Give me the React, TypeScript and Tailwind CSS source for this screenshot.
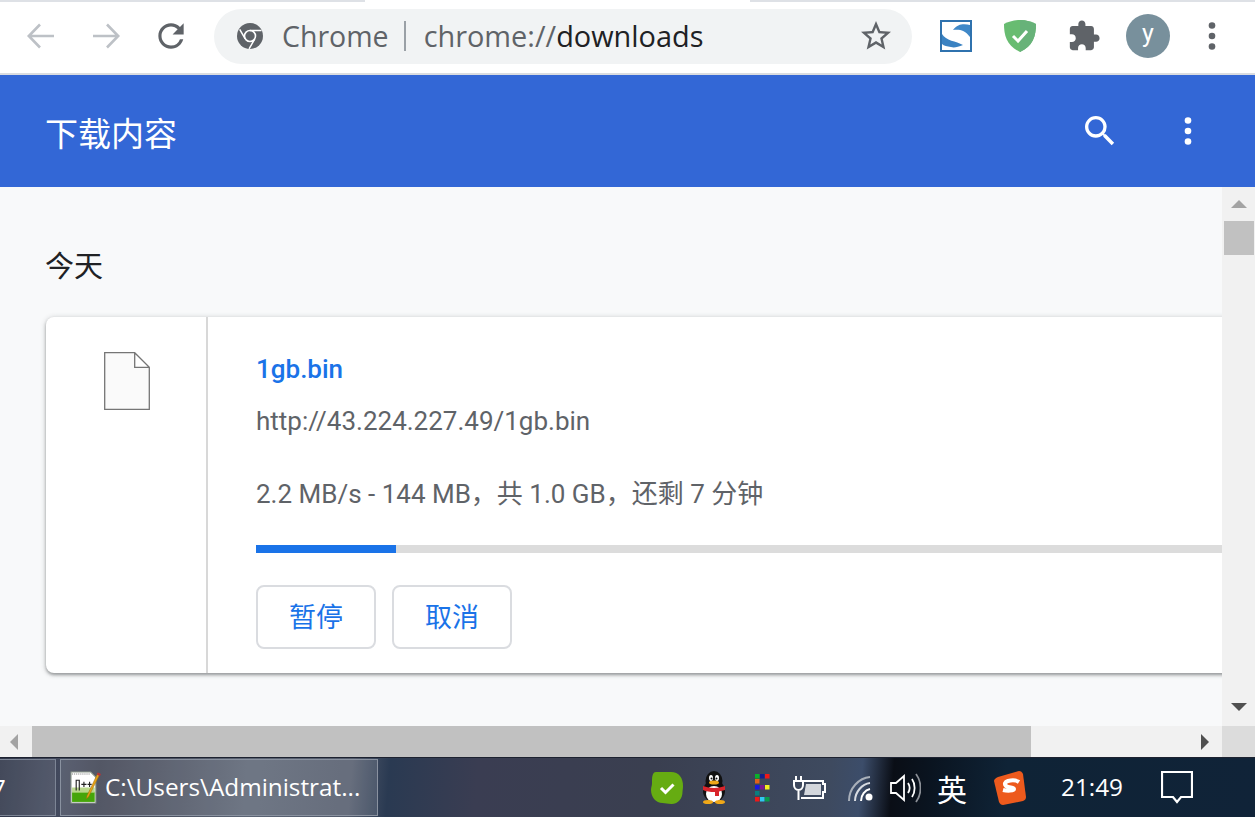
import React from "react";

const cjk = "font-['Roboto','Noto_Sans_CJK_SC',sans-serif]";

function Dots({ color, size = 36 }: { color: string; size?: number }) {
  return (
    <svg width={size} height={size} viewBox="0 0 24 24" fill={color}>
      <circle cx="12" cy="5" r="2.2" />
      <circle cx="12" cy="12" r="2.2" />
      <circle cx="12" cy="19" r="2.2" />
    </svg>
  );
}

function Arrow({ flip }: { flip?: boolean }) {
  return (
    <svg width="30" height="30" viewBox="0 0 30 30" fill="none" stroke="#bdc1c6" strokeWidth="2.6" style={flip ? { transform: "scaleX(-1)" } : undefined}>
      <path d="M28 15H3M14 3.500 2.800 15 14 26.500" />
    </svg>
  );
}

function ToolbarIcons() {
  return (
    <>
      <svg width="32" height="32" viewBox="0 0 32 32" className="ml-[28px]">
        <rect x="0" y="0" width="32" height="32" fill="#2f72ae" />
        <rect x="2" y="2" width="28" height="28" fill="#fff" />
        <path d="M13 10C18 3 25 4 30 5v12C25 10 19 9 13 10z" fill="#3f88c8" />
        <path d="M2 14c4 7 14 7 21 11-5 2-9 3-12 2-4-1-7-1-9-3z" fill="#3a82c2" />
      </svg>
      <svg width="32" height="32" viewBox="0 0 32 32" className="ml-[32px]">
        <path d="M16 0C10 0 4 2 0 4c0 12 3 22 16 28 13-6 16-16 16-28-4-2-10-4-16-4z" fill="#68bc71" />
        <path d="M16 0c6 0 12 2 16 4 0 12-3 22-16 28z" fill="#67b279" />
        <path d="M9 16l5 5 9-10" fill="none" stroke="#fff" strokeWidth="3" />
      </svg>
      <svg width="34" height="34" viewBox="0 0 24 24" fill="#5f6368" className="ml-[31px]">
        <path d="M20.500 11H19V7c0-1.100-.9-2-2-2h-4V3.500C13 2.120 11.880 1 10.500 1S8 2.120 8 3.500V5H4c-1.100 0-1.990.9-1.990 2v3.800H3.500c1.490 0 2.700 1.210 2.700 2.700s-1.210 2.700-2.700 2.700H2V20c0 1.100.9 2 2 2h3.800v-1.500c0-1.490 1.210-2.700 2.700-2.700 1.490 0 2.700 1.210 2.700 2.700V22H17c1.100 0 2-.9 2-2v-4h1.500c1.380 0 2.500-1.120 2.500-2.500S21.880 11 20.500 11z" />
      </svg>
      <div className="ml-[25px] flex h-[44px] w-[44px] items-center justify-center rounded-full bg-[#78909c] pb-[5px] font-['Roboto',sans-serif] text-[25px] text-white">
        y
      </div>
      <div className="ml-[24px]">
        <Dots color="#5f6368" />
      </div>
    </>
  );
}

function Toolbar() {
  return (
    <div className="relative flex h-[75px] shrink-0 items-center border-b-2 border-[#dadce0] bg-white pl-[26px] pb-[1px]">
      <div className="absolute left-0 top-0 h-[2px] w-[365px] bg-[#dee1e6]" />
      <div className="absolute left-[750px] right-0 top-0 h-[2px] bg-[#dee1e6]" />
      <Arrow />
      <div className="ml-[35px]">
        <Arrow flip />
      </div>
      <svg width="38" height="38" viewBox="0 0 24 24" fill="#5f6368" className="ml-[31px]">
        <path d="M17.650 6.350A7.958 7.958 0 0 0 12 4c-4.420 0-7.990 3.580-7.990 8s3.570 8 7.990 8c3.730 0 6.840-2.550 7.730-6h-2.080A5.990 5.990 0 0 1 12 18c-3.310 0-6-2.690-6-6s2.690-6 6-6c1.660 0 3.140.69 4.220 1.780L13 11h7V4l-2.350 2.350z" />
      </svg>
      <div className="ml-[24px] flex h-[55px] w-[698px] items-center rounded-full bg-[#f1f3f4] pl-[23px] font-['Open_Sans',sans-serif] text-[#5f6368]">
        <svg width="26" height="26" viewBox="0 0 26 26" className="shrink-0">
          <circle cx="13" cy="13" r="13" fill="#5f6368" />
          <circle cx="13" cy="13" r="5.500" fill="#5f6368" stroke="#fff" strokeWidth="1.600" />
          <path d="M13 7.500h11.500M8.200 15.800 2.700 6.300M17.800 15.800l-5.700 10" stroke="#fff" strokeWidth="1.500" fill="none" />
        </svg>
        <span className="ml-[19px] text-[28.500px] leading-none">Chrome</span>
        <div className="ml-[15px] h-[30px] w-[2px] bg-[#9aa0a6]" />
        <span className="ml-[18px] text-[28.900px] leading-none">
          chrome://<span className="text-[#202124]">downloads</span>
        </span>
        <svg width="36" height="36" viewBox="0 0 24 24" fill="#5f6368" className="ml-auto mr-[18px]">
          <path d="M22 9.240l-7.190-.62L12 2 9.190 8.630 2 9.240l5.460 4.730L5.820 21 12 17.270 18.180 21l-1.630-7.030L22 9.240zM12 15.400l-3.760 2.270 1-4.280-3.320-2.880 4.380-.38L12 6.100l1.710 4.040 4.380.38-3.320 2.880 1 4.280L12 15.400z" />
        </svg>
      </div>
      <ToolbarIcons />
    </div>
  );
}

function Header() {
  return (
    <div className={`flex h-[112px] shrink-0 items-center bg-[#3367d6] pl-[45px] pr-[49px] text-white ${cjk}`}>
      <h1 className="mt-[6px] text-[33px] font-normal leading-none">下载内容</h1>
      <svg width="40" height="40" viewBox="0 0 24 24" fill="#fff" className="ml-auto">
        <path d="M15.500 14h-.79l-.28-.27A6.471 6.471 0 0 0 16 9.500 6.500 6.500 0 1 0 9.500 16c1.610 0 3.090-.59 4.230-1.570l.27.28v.79l5 4.990L20.490 19l-4.990-5zm-6 0C7.010 14 5 11.990 5 9.500S7.010 5 9.500 5 14 7.010 14 9.500 11.990 14 9.500 14z" />
      </svg>
      <div className="ml-[50px]">
        <Dots color="#fff" />
      </div>
    </div>
  );
}

function DownloadCard() {
  return (
    <div className="flex h-[356px] w-[1300px] shrink-0 rounded-[8px] bg-white shadow-[0_2px_3px_0_rgba(60,64,67,0.4),0_1px_5px_1px_rgba(60,64,67,0.2)]">
      <div className="flex w-[162px] shrink-0 justify-center border-r-2 border-[#d8d8d8] pl-[1px] pt-[35px]">
        <svg width="46" height="58" viewBox="0 0 46 58" fill="#fafafa" stroke="#757575" strokeWidth="1.300">
          <path d="M.7.700h30l14.600 14.600v42H.7zM30.700.700v14.600h14.600" />
        </svg>
      </div>
      <div className={`w-[1000px] flex-1 pl-[48px] ${cjk}`}>
        <div className="mt-[37px] text-[26px] font-medium leading-[30px] text-[#1a73e8]">1gb.bin</div>
        <div className="mt-[22px] text-[26px] leading-[30px] text-[#5f6368]">http://43.224.227.49/1gb.bin</div>
        <div className="mt-[42px] text-[26px] leading-[32px] text-[#5f6368]">2.2 MB/s - 144 MB，共 1.0 GB，还剩 7 分钟</div>
        <div className="mt-[35px] h-[8px] bg-[#dcdcdc]">
          <div className="h-full w-[140px] bg-[#1a73e8]" />
        </div>
        <div className="mt-[32px] flex gap-[16px]">
          <button className="flex h-[64px] w-[120px] items-center justify-center rounded-[8px] border-2 border-[#dadce0] bg-white pt-[2px] text-[27px] text-[#1a73e8]">暂停</button>
          <button className="flex h-[64px] w-[120px] items-center justify-center rounded-[8px] border-2 border-[#dadce0] bg-white pt-[2px] text-[27px] text-[#1a73e8]">取消</button>
        </div>
      </div>
    </div>
  );
}

function VScroll() {
  return (
    <div className="flex w-[33px] shrink-0 flex-col items-center bg-[#f1f1f1]">
      <svg width="16" height="8" viewBox="0 0 16 8" fill="#a3a3a3" className="mt-[13px]">
        <path d="M8 0l8 8H0z" />
      </svg>
      <div className="ml-[1px] mt-[13px] h-[34px] w-[30px] bg-[#c1c1c1]" />
      <svg width="16" height="8" viewBox="0 0 16 8" fill="#505050" className="mb-[15px] mt-auto">
        <path d="M0 0h16L8 8z" />
      </svg>
    </div>
  );
}

function HScroll() {
  return (
    <div className="flex h-[31px] shrink-0 items-center bg-[#f1f1f1]">
      <div className="flex w-[32px] shrink-0 justify-center">
        <svg width="8" height="16" viewBox="0 0 8 16" fill="#a3a3a3" className="mr-[5px]">
          <path d="M8 0v16L0 8z" />
        </svg>
      </div>
      <div className="h-full w-[999px] bg-[#c1c1c1]" />
      <div className="flex-1" />
      <svg width="8" height="16" viewBox="0 0 8 16" fill="#505050" className="mr-[13px]">
        <path d="M0 0l8 8-8 8z" />
      </svg>
      <div className="h-full w-[33px] bg-[#dcdcdc]" />
    </div>
  );
}

function NotepadIcon() {
  return (
    <svg width="33" height="33" viewBox="0 0 32 32" className="shrink-0">
      <path d="M1 1h19l5 5v25H1z" fill="#fff" stroke="#8d9a8c" />
      <path d="M2 20h22v10H2z" fill="#46a50a" />
      <path d="M2 16h22v5H2z" fill="#b9d88a" />
      <path d="M2 3h17" stroke="#777" strokeDasharray="1 1" />
      <path d="M6 19V9h3v10M11 13h5M13.500 10.500v5M17 13h4M19 10.500v5" fill="none" stroke="#222" strokeWidth="1.100" />
      <path d="M29 3 18 25l-2 2 .5-3L27 2z" fill="#e8a317" stroke="#9c6b0e" strokeWidth=".5" />
      <path d="M27 1.500 30 3l-1 2-3-1.500z" fill="#b3333a" />
    </svg>
  );
}

function Tray() {
  return (
    <div className="flex items-center">
      <svg width="32" height="32" viewBox="0 0 32 32" className="ml-[7px]">
        <path d="M5 0h15c8 0 12 6 12 14 0 3-.5 4-.5 6 0 6-4 12-11 12-4 0-6-1-9-1C5 31 0 25 0 18c0-3 1-4 1-7C1 6 1 0 5 0z" fill="#66ac12" />
        <path d="M10 16l4.500 4.500 8-8" fill="none" stroke="#fff" strokeWidth="3" />
      </svg>
      <svg width="28" height="33" viewBox="0 0 28 33" className="ml-[17px]">
        <ellipse cx="14" cy="20" rx="11" ry="11" fill="#111" />
        <ellipse cx="14" cy="10" rx="8.500" ry="10" fill="#111" />
        <ellipse cx="14" cy="23" rx="8" ry="8" fill="#fff" />
        <ellipse cx="11" cy="7" rx="2" ry="3" fill="#fff" />
        <ellipse cx="17" cy="7" rx="2" ry="3" fill="#fff" />
        <circle cx="11.500" cy="7.500" r="1" fill="#111" />
        <circle cx="16.500" cy="7.500" r="1" fill="#111" />
        <ellipse cx="14" cy="11.500" rx="5" ry="2" fill="#f0a818" />
        <path d="M3 15c7 2.500 15 2.500 22 0v4l-6 1.500V25h-4v-4c-5 0-9-.5-12-2z" fill="#d9252c" />
        <ellipse cx="8" cy="31" rx="5" ry="2" fill="#f0a818" />
        <ellipse cx="20" cy="31" rx="5" ry="2" fill="#f0a818" />
      </svg>
      <svg width="16" height="28" viewBox="0 0 16 28" className="ml-[27px]">
        <rect x="0" y="0" width="4.500" height="4.500" fill="#0ab02a" />
        <rect x="5" y="0" width="4.500" height="4.500" fill="#141f8c" />
        <rect x="10" y="0" width="4.500" height="4.500" fill="#f01818" />
        <rect x="0" y="5" width="4.500" height="4.500" fill="#e0621a" />
        <rect x="0" y="11" width="4.500" height="4.500" fill="#1818e0" />
        <rect x="5" y="11" width="4.500" height="4.500" fill="#7a1a90" />
        <rect x="10" y="11" width="4.500" height="4.500" fill="#f5ee20" />
        <rect x="0" y="17" width="4.500" height="4.500" fill="#0a8080" />
        <rect x="0" y="23" width="4.500" height="4.500" fill="#f01818" />
        <rect x="5" y="23" width="4.500" height="4.500" fill="#30c8f0" />
        <rect x="10" y="23" width="4.500" height="4.500" fill="#0a9a4c" />
      </svg>
      <svg width="34" height="24" viewBox="0 0 34 24" fill="none" stroke="#fff" strokeWidth="2" className="ml-[21px]">
        <path d="M4 0v5M9 0v5M2 5h9v4c0 3-2 5-4.500 5S2 12 2 9zM6.500 14v10" />
        <path d="M11 5h20v3h2v8h-2v6H9" />
        <path d="M14 8h15v11H12z" fill="#d4d7dc" stroke="none" />
      </svg>
      <svg width="28" height="26" viewBox="0 0 28 26" fill="none" className="ml-[22px]">
        <path d="M1 26C1 13 11 3 22 2" stroke="#a9b0ba" strokeWidth="2" />
        <path d="M7 26C7 17 14 9 22 8" stroke="#d8dce2" strokeWidth="2" />
        <path d="M13 26c0-6 4-11 9-12" stroke="#fff" strokeWidth="2" />
        <circle cx="21" cy="22" r="3.500" fill="#fff" />
      </svg>
      <svg width="31" height="30" viewBox="0 0 31 30" fill="none" stroke="#fff" strokeWidth="1.800" className="ml-[14px]">
        <path d="M1 10h5l8-7v24l-8-7H1z" />
        <path d="M18 10c2 3 2 7 0 10" />
        <path d="M22 6c3.500 5 3.500 13 0 18" />
        <path d="M26 1c6 8 6 20 0 28" stroke="#8b8f96" />
      </svg>
      <span className="ml-[16px] font-['Noto_Sans_CJK_SC',sans-serif] text-[30px] leading-none text-white">英</span>
      <svg width="32" height="34" viewBox="0 0 32 34" className="ml-[27px]">
        <path d="M4 6 25 0c2 0 3 1 4 3l3 23c0 2-1 3-3 4L9 34c-2 0-3-1-4-3L0 10c0-2 2-3 4-4z" fill="#ed5a1d" />
        <path d="M25 11c-3-2-7-2-11-1-3 1-4 3-2 5 3 2 8 1 8 3s-7 2-11 1" fill="none" stroke="#fff" strokeWidth="4" />
      </svg>
    </div>
  );
}

function Taskbar() {
  return (
    <div className="flex h-[60px] shrink-0 items-center border-t border-[#1d2230] bg-[linear-gradient(95deg,#2e3548_0%,#434a5e_5%,#3c4050_8%,#5b6474_20%,#525a6b_28%,#2a3a52_31%,#3a3d52_38%,#3a3f50_52%,#3e4a5f_66%,#3c4d6a_68.500%,#0a0e16_71%,#0a1420_74%,#0f2336_80%,#102338_100%)] font-['Open_Sans',sans-serif] text-white">
      <div className="flex h-[57px] w-[56px] shrink-0 items-center overflow-hidden border-y border-r border-[#7d8595] bg-[#ffffff1a] text-[26px] leading-none">
        <span className="-ml-[9px]">7</span>
      </div>
      <div className="ml-[4px] flex h-[57px] w-[318px] shrink-0 items-center border border-[#8a92a0] bg-[#ffffff1f] pl-[9px]">
        <NotepadIcon />
        <span className="ml-[2px] text-[24.300px] leading-none">C:\Users\Administrat...</span>
      </div>
      <div className="ml-[266px]">
        <Tray />
      </div>
      <span className="ml-[35px] text-[24.300px] leading-none">21:49</span>
      <svg width="32" height="33" viewBox="0 0 32 33" fill="none" stroke="#fff" strokeWidth="2.200" className="ml-[38px]">
        <path d="M1 1h30v25H20l-4 5-4-5H1z" />
      </svg>
    </div>
  );
}

export default function App() {
  return (
    <div className="flex h-[817px] w-[1255px] flex-col overflow-hidden bg-[#f8f9fa]">
      <Toolbar />
      <Header />
      <div className="flex min-h-0 flex-1">
        <div className="min-w-0 flex-1 overflow-hidden pl-[46px]">
          <h2 className={`-ml-[1px] mt-[64px] text-[29px] font-normal leading-[32px] text-[#202124] ${cjk}`}>今天</h2>
          <div className="mt-[34px]">
            <DownloadCard />
          </div>
        </div>
        <VScroll />
      </div>
      <HScroll />
      <Taskbar />
    </div>
  );
}
